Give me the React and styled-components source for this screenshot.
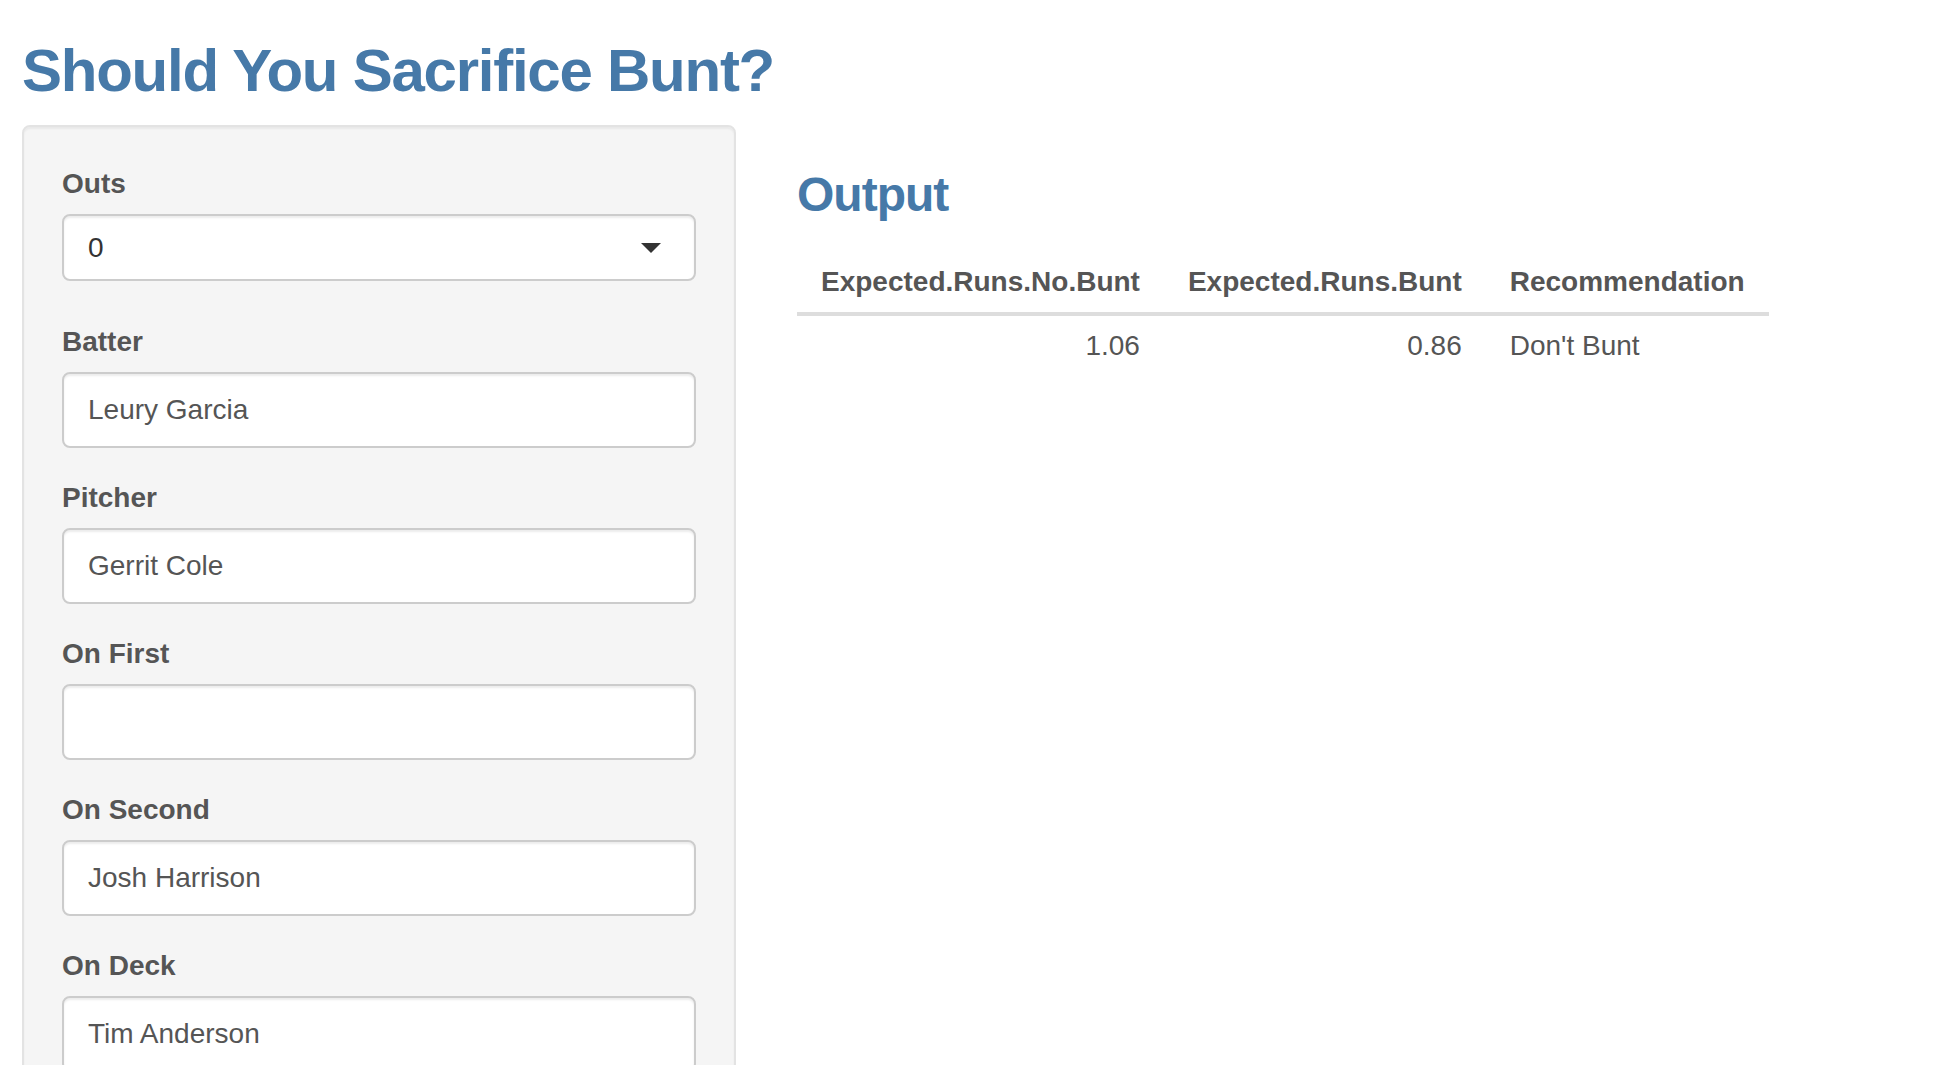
import React from "react";
import styled, { createGlobalStyle } from "styled-components";

const GlobalStyle = createGlobalStyle`
	html,
	body {
		margin: 0;
		padding: 0;
		background: #ffffff;
	}
	body {
		font-family: "Liberation Sans", Arial, Helvetica, sans-serif;
		font-size: 28px;
		line-height: 40px;
		color: #555555;
	}
	*,
	*::before,
	*::after {
		box-sizing: border-box;
	}
`;

const Page = styled.div`
	padding: 0 22px;
`;

const Title = styled.h2`
	margin: 38px 0 21px;
	font-size: 60px;
	line-height: 66px;
	font-weight: 700;
	letter-spacing: -1.25px;
	color: #4679a8;
`;

const Layout = styled.div`
	display: flex;
	align-items: flex-start;
`;

const Sidebar = styled.form`
	flex: 0 0 714px;
	width: 714px;
	padding: 37px 38px 38px;
	background: #f5f5f5;
	border: 2px solid #e3e3e3;
	border-radius: 8px;
	box-shadow: inset 0 2px 2px rgba(0, 0, 0, 0.05);
`;

const FormGroup = styled.div`
	margin-bottom: ${(p) => p.$gap || 30}px;
`;

const Label = styled.label`
	display: block;
	margin-bottom: 10px;
	font-weight: 700;
	color: #555555;
`;

const TextInput = styled.input`
	display: block;
	width: 100%;
	height: 76px;
	padding: 0 24px;
	font: inherit;
	color: #555555;
	background: #ffffff;
	border: 2px solid #cccccc;
	border-radius: 8px;
	box-shadow: inset 0 2px 2px rgba(0, 0, 0, 0.075);
	outline: none;
`;

const SelectBox = styled.div`
	display: flex;
	align-items: center;
	justify-content: space-between;
	height: 67px;
	padding: 0 24px;
	color: #333333;
	background: #ffffff;
	border: 2px solid #cccccc;
	border-radius: 8px;
	box-shadow: inset 0 2px 2px rgba(0, 0, 0, 0.075);
`;

const Caret = styled.span`
	width: 0;
	height: 0;
	margin-right: 9px;
	border-style: solid;
	border-width: 10px 10px 0 10px;
	border-color: #333333 transparent transparent transparent;
`;

const Main = styled.div`
	flex: 1;
	margin-left: 61px;
`;

const OutputTitle = styled.h3`
	margin: 43px 0 31px;
	font-size: 48px;
	line-height: 53px;
	font-weight: 700;
	letter-spacing: -1px;
	color: #4679a8;
`;

const Table = styled.table`
	border-collapse: collapse;
	border-spacing: 0;
`;

const Th = styled.th`
	padding: 10px 24px;
	font-weight: 700;
	text-align: ${(p) => p.$align || "left"};
	color: #555555;
	border-bottom: 4px solid #dddddd;
`;

const Td = styled.td`
	padding: 10px 24px;
	text-align: ${(p) => p.$align || "left"};
	color: #555555;
`;

const fields = [
	{ label: "Batter", value: "Leury Garcia" },
	{ label: "Pitcher", value: "Gerrit Cole" },
	{ label: "On First", value: "" },
	{ label: "On Second", value: "Josh Harrison" },
	{ label: "On Deck", value: "Tim Anderson" },
];

const columns = [
	{ name: "Expected.Runs.No.Bunt", align: "right" },
	{ name: "Expected.Runs.Bunt", align: "right" },
	{ name: "Recommendation", align: "left" },
];

const rows = [["1.06", "0.86", "Don't Bunt"]];

function App() {
	return (
		<>
			<GlobalStyle />
			<Page>
				<Title>Should You Sacrifice Bunt?</Title>
				<Layout>
					<Sidebar onSubmit={(e) => e.preventDefault()}>
						<FormGroup $gap={41}>
							<Label>Outs</Label>
							<SelectBox>
								<span>0</span>
								<Caret />
							</SelectBox>
						</FormGroup>
						{fields.map((f) => (
							<FormGroup key={f.label}>
								<Label>{f.label}</Label>
								<TextInput type="text" defaultValue={f.value} />
							</FormGroup>
						))}
					</Sidebar>
					<Main>
						<OutputTitle>Output</OutputTitle>
						<Table>
							<thead>
								<tr>
									{columns.map((c) => (
										<Th key={c.name} $align={c.align}>
											{c.name}
										</Th>
									))}
								</tr>
							</thead>
							<tbody>
								{rows.map((r, i) => (
									<tr key={i}>
										{r.map((cell, j) => (
											<Td key={j} $align={columns[j].align}>
												{cell}
											</Td>
										))}
									</tr>
								))}
							</tbody>
						</Table>
					</Main>
				</Layout>
			</Page>
		</>
	);
}

export default App;
